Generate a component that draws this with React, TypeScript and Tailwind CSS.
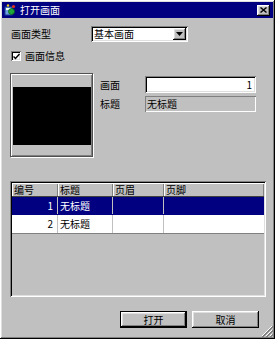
import React from "react";

const raised =
  "shadow-[inset_-1px_-1px_#000,inset_1px_1px_#fff,inset_-2px_-2px_#808080,inset_2px_2px_#dfdfdf]";
const sunken =
  "shadow-[inset_1px_1px_#808080,inset_-1px_-1px_#fff,inset_2px_2px_#000,inset_-2px_-2px_#dfdfdf]";

function TitleIcon() {
  return (
    <svg width="12" height="12" viewBox="0 0 12 12">
      <rect x="1" y="3" width="7" height="8" fill="#6fa0e0" stroke="#1a3f9a" strokeWidth="1" />
      <rect x="2" y="4" width="5" height="2" fill="#ffffff" />
      <circle cx="7.5" cy="7.5" r="3" fill="#1fa83a" stroke="#0a5a18" strokeWidth="0.8" />
      <circle cx="9.5" cy="2.5" r="1.6" fill="#e03020" />
      <circle cx="4" cy="1.5" r="1.2" fill="#f0d020" />
    </svg>
  );
}

export default function App() {
  const font = { fontFamily: '"Noto Sans CJK SC", "Liberation Sans", sans-serif' };
  return (
    <div
      className={`relative w-[275px] h-[339px] bg-[#c0c0c0] flex flex-col p-[2px] text-[10px] leading-none text-black ${raised}`}
      style={font}
    >
      {/* Title bar */}
      <div className="h-[16px] bg-[#000080] flex items-center pl-[2px] pr-[3px]">
        <TitleIcon />
        <span className="ml-[4px] text-white text-[10px]">打开画面</span>
        <div className="flex-1" />
        <div className={`w-[13px] h-[11px] bg-[#c0c0c0] flex items-center justify-center ${raised}`}>
          <svg width="7" height="6" viewBox="0 0 7 6">
            <path d="M0.5 0.5 L6.5 5.5 M6.5 0.5 L0.5 5.5" stroke="#000" strokeWidth="1.4" />
          </svg>
        </div>
      </div>

      <div className="flex flex-col pl-[8px]">
        {/* Row: 画面类型 */}
        <div className="mt-[8px] flex items-center h-[16px]">
          <span className="w-[81px] pl-[1px]">画面类型</span>
          <div className={`w-[97px] h-[16px] bg-white flex items-center pl-[3px] pr-[2px] ${sunken}`}>
            <span className="flex-1">基本画面</span>
            <div className={`w-[13px] h-[12px] bg-[#c0c0c0] flex items-center justify-center ${raised}`}>
              <svg width="7" height="4" viewBox="0 0 7 4">
                <path d="M0 0 H7 L3.5 4 Z" fill="#000" />
              </svg>
            </div>
          </div>
        </div>

        {/* Checkbox */}
        <div className="mt-[8px] flex items-center h-[12px] pl-[1px]">
          <div className={`w-[10px] h-[10px] bg-white flex items-center justify-center ${sunken}`}>
            <svg width="7" height="7" viewBox="0 0 7 7">
              <path d="M0.5 3.5 L2.5 5.5 L6.5 1" stroke="#000" strokeWidth="1.5" fill="none" />
            </svg>
          </div>
          <span className="ml-[4px]">画面信息</span>
        </div>

        {/* Preview + info */}
        <div className="mt-[11px] flex">
          <div className="w-[83px] h-[84px] border border-[#505050] shadow-[inset_1px_1px_#fff,inset_-1px_-1px_#808080,1px_1px_#fff] pt-[13px] pl-[2px] pr-[1px]">
            <div className="h-[58px] bg-black" />
          </div>
          <div className="ml-[7px] mt-[3px] flex flex-col gap-[3px]">
            <div className="flex items-center h-[17px]">
              <span className="w-[45px]">画面</span>
              <div className={`w-[111px] h-[17px] bg-white flex items-center justify-end pr-[4px] ${sunken}`}>
                1
              </div>
            </div>
            <div className="flex items-center h-[16px]">
              <span className="w-[45px]">标题</span>
              <div className="w-[111px] h-[16px] bg-[#c0c0c0] flex items-center pl-[2px] shadow-[inset_1px_1px_#808080,inset_-1px_-1px_#fff]">
                无标题
              </div>
            </div>
          </div>
        </div>

        {/* Table */}
        <div className={`mt-[24px] w-[256px] h-[116px] bg-[#c0c0c0] p-[2px] flex flex-col ${sunken}`}>
          <div className="flex h-[14px] bg-[#c0c0c0] border-b border-[#404040]">
            {[
              ["编号", "w-[46px]"],
              ["标题", "w-[55px]"],
              ["页眉", "w-[51px]"],
              ["页脚", "flex-1"],
            ].map(([t, w]) => (
              <div
                key={t}
                className={`${w} h-full flex items-center pl-[2px] shadow-[inset_1px_1px_#fff,inset_-1px_0_#808080]`}
              >
                {t}
              </div>
            ))}
          </div>
          <div className="flex h-[18px] bg-[#000080] text-white border-b border-[#000080]">
            <div className="w-[46px] flex items-center justify-end pr-[4px] border-r border-[#c0c0c0]">1</div>
            <div className="w-[55px] flex items-center pl-[2px] border-r border-[#c0c0c0]">无标题</div>
            <div className="w-[51px] border-r border-[#c0c0c0]" />
            <div className="flex-1" />
          </div>
          <div className="flex h-[19px] bg-white border-b border-[#808080]">
            <div className="w-[46px] flex items-center justify-end pr-[4px] border-r border-[#c0c0c0]">2</div>
            <div className="w-[55px] flex items-center pl-[2px] border-r border-[#c0c0c0]">无标题</div>
            <div className="w-[51px] border-r border-[#c0c0c0]" />
            <div className="flex-1" />
          </div>
        </div>

        {/* Buttons */}
        <div className="mt-[14px] flex gap-[5px] ml-[110px]">
          <div className="w-[67px] h-[17px] border border-black flex">
            <div className={`flex-1 bg-[#c0c0c0] flex items-center justify-center ${raised}`}>打开</div>
          </div>
          <div className={`w-[67px] h-[17px] bg-[#c0c0c0] flex items-center justify-center ${raised}`}>取消</div>
        </div>
      </div>

      {/* Resize grip */}
      <svg className="absolute right-[2px] bottom-[2px]" width="12" height="12" viewBox="0 0 12 12">
        <path d="M11 1 L1 11 M11 5 L5 11 M11 9 L9 11" stroke="#fff" strokeWidth="1" />
        <path d="M12 1 L1 12 M12 2 L2 12 M12 5 L5 12 M12 6 L6 12 M12 9 L9 12 M12 10 L10 12" stroke="#808080" strokeWidth="1" />
      </svg>
    </div>
  );
}
